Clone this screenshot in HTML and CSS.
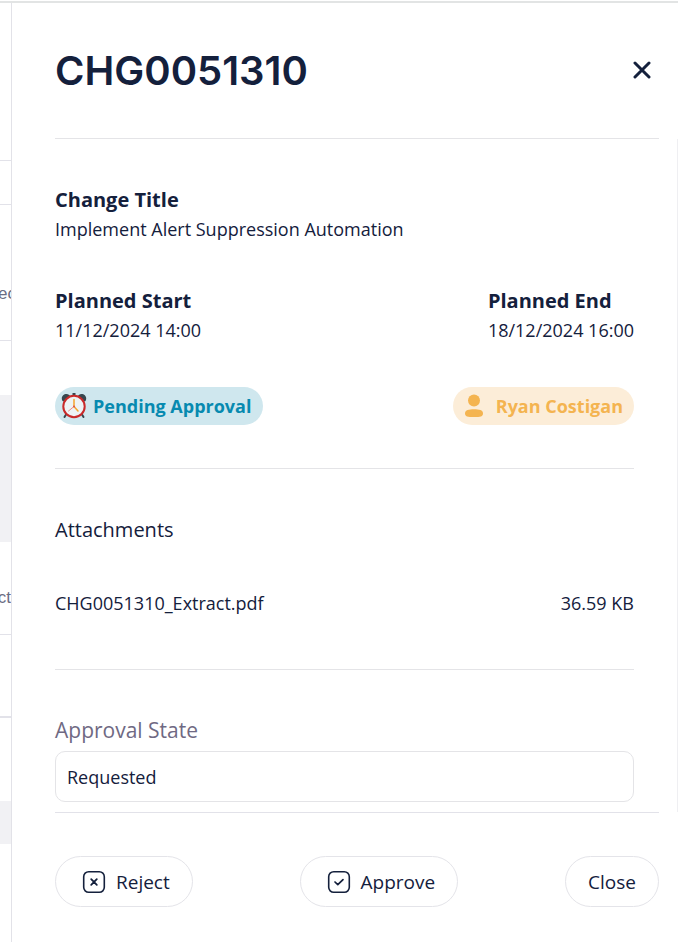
FILE: index.html
```html
<!DOCTYPE html>
<html lang="en">
<head>
<meta charset="utf-8">
<meta name="viewport" content="width=device-width, initial-scale=1">
<title>CHG0051310</title>
<link rel="stylesheet" href="styles.css">
</head>
<body>
<div class="page">
  <div class="backdrop">
    <div class="cell cell-head"></div>
    <div class="cell cell-filter"></div>
    <div class="cell cell-tall"><span>ec</span></div>
    <div class="cell cell-space"></div>
    <div class="cell cell-shade"></div>
    <div class="cell cell-row"><span>ct</span></div>
    <div class="cell cell-group"></div>
    <div class="cell cell-blank"></div>
    <div class="cell cell-foot"></div>
  </div>
  <main class="panel">
    <header class="panel-header">
      <h1>CHG0051310</h1>
      <button class="dismiss" type="button" aria-label="Dismiss">
        <svg width="20" height="20" viewBox="0 0 20 20"><path d="M3 2L17 16M17 2L3 16" fill="none" stroke="currentColor" stroke-width="3" stroke-linecap="round"/></svg>
      </button>
    </header>
    <div class="panel-body">
      <section class="details">
        <div>
          <h2>Change Title</h2>
          <p>Implement Alert Suppression Automation</p>
        </div>
        <div class="split">
          <div>
            <h2>Planned Start</h2>
            <p>11/12/2024 14:00</p>
          </div>
          <div>
            <h2>Planned End</h2>
            <p>18/12/2024 16:00</p>
          </div>
        </div>
        <div class="split">
          <span class="pill pill-status">
            <svg width="26" height="26" viewBox="0 0 26 26">
              <path d="M6 20L3.500 24M20 20L22.500 24" stroke="#37474f" stroke-width="2" stroke-linecap="round"/>
              <path d="M1.500 8C-.5 4.500 2 1 5.500 1C7.500 1 8.500 2 9 3L2.500 8.500ZM24.500 8C26.500 4.500 24 1 20.500 1C18.500 1 17.500 2 17 3L23.500 8.500Z" fill="#37474f"/>
              <path d="M11.500 0h3v3h-3z" fill="#37474f"/>
              <circle cx="13" cy="13.500" r="10.700" fill="#eef3f5" stroke="#c92a2a" stroke-width="2"/>
              <path d="M13 13.500V6.500M13 13.500L17 18" stroke="#f6a52d" stroke-width="1.500" stroke-linecap="round"/>
              <path d="M13 13.500L7.500 18" stroke="#ef8a80" stroke-width="1" stroke-linecap="round"/>
              <circle cx="13" cy="13.500" r="1" fill="#d9534f"/>
            </svg>
            Pending Approval
          </span>
          <span class="pill pill-person">
            <svg width="18" height="24" viewBox="0 0 18 24"><circle cx="9" cy="6.500" r="6" fill="currentColor"/><path d="M0 19.500C0 15.800 4 15.200 9 15.200S18 15.800 18 19.500C18 22.600 15.500 23 9 23S0 22.600 0 19.500Z" fill="currentColor"/></svg>
            Ryan Costigan
          </span>
        </div>
      </section>
      <section class="attachments">
        <h3>Attachments</h3>
        <div class="split">
          <p>CHG0051310_Extract.pdf</p>
          <p>36.59 KB</p>
        </div>
      </section>
      <section class="approval">
        <label for="approval-state">Approval State</label>
        <input id="approval-state" type="text" value="Requested">
      </section>
    </div>
    <footer class="panel-footer">
      <button class="action" type="button">
        <svg width="32" height="32" viewBox="0 0 32 32" fill="none" stroke="currentColor" stroke-linecap="round" stroke-linejoin="round"><rect x="5.700" y="5.700" width="20.600" height="20.600" rx="5" stroke-width="1.600"/><path d="M13.200 13.200L18.800 18.800M18.800 13.200L13.200 18.800" stroke-width="1.800"/></svg>
        Reject
      </button>
      <button class="action" type="button">
        <svg width="32" height="32" viewBox="0 0 32 32" fill="none" stroke="currentColor" stroke-linecap="round" stroke-linejoin="round"><rect x="5.700" y="5.700" width="20.600" height="20.600" rx="5" stroke-width="1.600"/><path d="M12 16L14.800 18.700L20 13.600" stroke-width="1.700"/></svg>
        Approve
      </button>
      <button class="action" type="button">Close</button>
    </footer>
  </main>
</div>
</body>
</html>
```
FILE: styles.css
```css
* {
  box-sizing: border-box;
}

body {
  margin: 0;
  padding-top: 1px;
  background: #fff;
  color: #14203c;
  font: 18px/28px "Open Sans", "Noto Sans", sans-serif;
}

h1, h2, h3, p {
  margin: 0;
}

button, input {
  font: inherit;
  color: inherit;
}

svg {
  display: block;
  flex: none;
}

.page {
  display: flex;
  min-height: calc(100vh - 1px);
  border-top: 2px solid #e2e4e4;
}

/* Edge of the record list behind the panel */
.backdrop {
  display: flex;
  flex-direction: column;
  width: 11px;
  overflow: hidden;
  color: #6a6d83;
  font: 17px/24px "Liberation Sans", sans-serif;
}

.cell {
  display: flex;
  align-items: center;
  border-bottom: 1px solid #e2e2e9;
}

.cell-head { height: 158px; }
.cell-filter { height: 44px; }
.cell-tall { height: 136px; padding-top: 42px; }
.cell-tall span { margin-left: -2px; }
.cell-space { height: 54px; border: 0; }
.cell-shade { height: 147px; border: 0; background: #f1f1f4; }
.cell-row { height: 93px; padding-top: 20px; justify-content: flex-end; }
.cell-group { height: 83px; border-bottom-width: 2px; }
.cell-blank { height: 83px; border: 0; }
.cell-foot { height: 43px; border: 0; background: #f1f1f4; }

.panel {
  display: flex;
  flex: 1;
  flex-direction: column;
  min-width: 0;
  padding-left: 43px;
  border-left: 1px solid #e2e2e8;
}

.panel-header {
  display: flex;
  align-items: center;
  justify-content: space-between;
  height: 136px;
  margin-right: 19px;
  padding-right: 7px;
  border-bottom: 1px solid #e4e4e7;
}

h1 {
  font: 600 40px/48px Inter, sans-serif;
}

.dismiss {
  padding: 0;
  border: 0;
  background: none;
}

.panel-body {
  padding: 46px 43px 10px 0;
  border-right: 1px solid #efeff2;
}

h2 {
  font-size: 20px;
  font-weight: 700;
  line-height: 30px;
}

h3 {
  font-size: 20px;
  font-weight: 400;
  line-height: 30px;
}

.split {
  display: flex;
  justify-content: space-between;
}

.details, .attachments {
  display: flex;
  flex-direction: column;
  gap: 44px;
  border-bottom: 1px solid #e4e4e7;
}

.details {
  gap: 43px;
  padding-bottom: 43px;
}

.attachments {
  padding: 46px 0 52px;
}

.pill {
  display: flex;
  align-items: center;
  height: 38px;
  border-radius: 19px;
  font-weight: 700;
}

.pill-status {
  gap: 6px;
  padding: 0 12px 0 6px;
  background: #cfe7ee;
  color: #078ab0;
}

.pill-person {
  gap: 13px;
  padding: 0 11px 0 12px;
  background: #fcedd8;
  color: #f4b450;
}

.approval {
  padding-top: 45px;
}

label {
  display: block;
  margin-bottom: 6px;
  color: #6f6983;
  font-size: 21px;
  line-height: 30px;
}

input {
  display: block;
  width: 100%;
  height: 51px;
  padding: 0 11px;
  border: 1px solid #e4e4e7;
  border-radius: 10px;
  background: #fff;
}

.panel-footer {
  display: flex;
  align-items: center;
  justify-content: space-between;
  margin-right: 19px;
  padding: 43px 0 34px;
  border-top: 1px solid #e2e2e9;
}

.action {
  display: flex;
  align-items: center;
  gap: 6px;
  height: 51px;
  padding: 0 22px;
  border: 1px solid #e4e4e9;
  border-radius: 26px;
  background: #fff;
  font-size: 19px;
}
```
